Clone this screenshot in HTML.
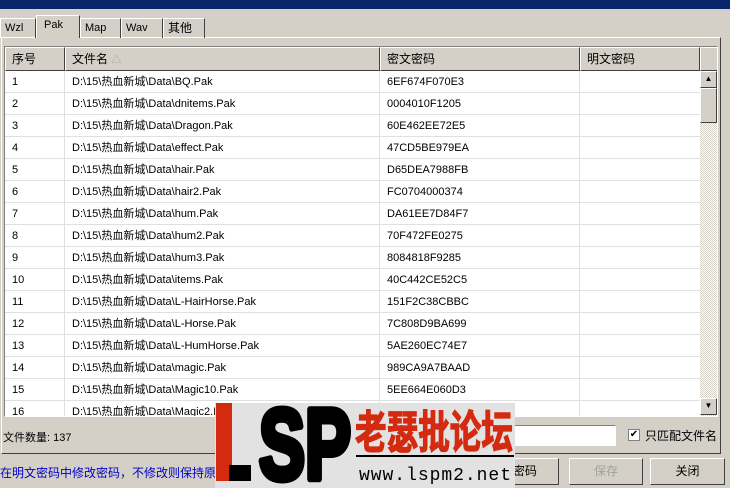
<!DOCTYPE html>
<html><head><meta charset="utf-8"><style>
*{margin:0;padding:0;box-sizing:border-box}
html,body{width:730px;height:488px;overflow:hidden}
body{background:#d4d0c8;font-family:"Liberation Sans","Noto Sans CJK SC",sans-serif;font-size:11px;color:#000;position:relative}
.abs{position:absolute}
.title{left:0;top:0;width:730px;height:9px;background:#0a246a}
.tab{position:absolute;top:18px;height:20px;border:1px solid #fff;border-right:1px solid #404040;border-bottom:none;padding:0 0 0 4px;font-size:11px;line-height:19px}
.panel{left:1px;top:37px;width:720px;height:417px;border:1px solid #fff;border-right-color:#404040;border-bottom-color:#404040}
.list{left:4px;top:46px;width:714px;height:371px;background:#fff;border:1px solid #808080;border-right-color:#fff;border-bottom-color:#fff;overflow:hidden}
.hd{position:absolute;top:0;height:24px;background:#d4d0c8;border:1px solid #fff;border-right-color:#404040;border-bottom-color:#404040;padding:0 0 0 6px;font-size:12px;line-height:22px}
.row{position:absolute;left:0;width:695px;height:22px;border-bottom:1px solid #e0dfe3;font-size:11px}
.row span{position:absolute;top:1px;line-height:21px;height:21px}
.vl{position:absolute;top:24px;width:1px;height:350px;background:#e0dfe3}
.sb{position:absolute;left:695px;top:24px;width:17px;height:346px;background:repeating-conic-gradient(#d4d0c8 0 25%,#fff 0 50%) 0 0/2px 2px}
.btn3{position:absolute;background:#d4d0c8;border:1px solid #fff;border-right-color:#404040;border-bottom-color:#404040}
.btn{position:absolute;top:458px;height:27px;background:#d4d0c8;border:1px solid #fff;border-right-color:#404040;border-bottom-color:#404040;text-align:center;font-size:12px;line-height:24px}
</style></head><body>
<div class="abs title"></div>
<div class="abs panel"></div>
<div class="tab" style="left:0;width:36px;">Wzl</div>
<div class="tab" style="left:36px;top:15px;height:23px;width:44px;background:#d4d0c8;padding-left:7px;">Pak</div>
<div class="tab" style="left:80px;width:41px;">Map</div>
<div class="tab" style="left:121px;width:42px;">Wav</div>
<div class="tab" style="left:163px;width:42px;font-size:12px">其他</div>
<div class="abs list">
<div class="hd" style="left:0;width:60px">序号</div>
<div class="hd" style="left:60px;width:315px">文件名 <span style="color:#a0a0a0;font-size:10px">△</span></div>
<div class="hd" style="left:375px;width:200px">密文密码</div>
<div class="hd" style="left:575px;width:120px">明文密码</div>
<div class="hd" style="left:695px;width:19px;padding:0"></div>
<div class="vl" style="left:59px"></div><div class="vl" style="left:374px"></div><div class="vl" style="left:574px"></div>
<div class="row" style="top:24px"><span style="left:7px">1</span><span style="left:67px">D:\15\热血新城\Data\BQ.Pak</span><span style="left:382px">6EF674F070E3</span></div>
<div class="row" style="top:46px"><span style="left:7px">2</span><span style="left:67px">D:\15\热血新城\Data\dnitems.Pak</span><span style="left:382px">0004010F1205</span></div>
<div class="row" style="top:68px"><span style="left:7px">3</span><span style="left:67px">D:\15\热血新城\Data\Dragon.Pak</span><span style="left:382px">60E462EE72E5</span></div>
<div class="row" style="top:90px"><span style="left:7px">4</span><span style="left:67px">D:\15\热血新城\Data\effect.Pak</span><span style="left:382px">47CD5BE979EA</span></div>
<div class="row" style="top:112px"><span style="left:7px">5</span><span style="left:67px">D:\15\热血新城\Data\hair.Pak</span><span style="left:382px">D65DEA7988FB</span></div>
<div class="row" style="top:134px"><span style="left:7px">6</span><span style="left:67px">D:\15\热血新城\Data\hair2.Pak</span><span style="left:382px">FC0704000374</span></div>
<div class="row" style="top:156px"><span style="left:7px">7</span><span style="left:67px">D:\15\热血新城\Data\hum.Pak</span><span style="left:382px">DA61EE7D84F7</span></div>
<div class="row" style="top:178px"><span style="left:7px">8</span><span style="left:67px">D:\15\热血新城\Data\hum2.Pak</span><span style="left:382px">70F472FE0275</span></div>
<div class="row" style="top:200px"><span style="left:7px">9</span><span style="left:67px">D:\15\热血新城\Data\hum3.Pak</span><span style="left:382px">8084818F9285</span></div>
<div class="row" style="top:222px"><span style="left:7px">10</span><span style="left:67px">D:\15\热血新城\Data\items.Pak</span><span style="left:382px">40C442CE52C5</span></div>
<div class="row" style="top:244px"><span style="left:7px">11</span><span style="left:67px">D:\15\热血新城\Data\L-HairHorse.Pak</span><span style="left:382px">151F2C38CBBC</span></div>
<div class="row" style="top:266px"><span style="left:7px">12</span><span style="left:67px">D:\15\热血新城\Data\L-Horse.Pak</span><span style="left:382px">7C808D9BA699</span></div>
<div class="row" style="top:288px"><span style="left:7px">13</span><span style="left:67px">D:\15\热血新城\Data\L-HumHorse.Pak</span><span style="left:382px">5AE260EC74E7</span></div>
<div class="row" style="top:310px"><span style="left:7px">14</span><span style="left:67px">D:\15\热血新城\Data\magic.Pak</span><span style="left:382px">989CA9A7BAAD</span></div>
<div class="row" style="top:332px"><span style="left:7px">15</span><span style="left:67px">D:\15\热血新城\Data\Magic10.Pak</span><span style="left:382px">5EE664E060D3</span></div>
<div class="row" style="top:354px"><span style="left:7px">16</span><span style="left:67px">D:\15\热血新城\Data\Magic2.Pak</span></div>
<div class="sb"></div>
<div class="btn3" style="left:695px;top:24px;width:17px;height:17px;font-size:8px;text-align:center;line-height:14px">▲</div>
<div class="btn3" style="left:695px;top:41px;width:17px;height:35px"></div>
<div class="btn3" style="left:695px;top:351px;width:17px;height:17px;font-size:8px;text-align:center;line-height:14px">▼</div>
</div>
<div class="abs" style="left:3px;top:429px;font-size:11px">文件数量: 137</div>
<div class="abs" style="left:512px;top:425px;width:104px;height:21px;background:#fff;border:1px solid #808080;border-right-color:#fff;border-bottom-color:#fff"></div>
<div class="abs" style="left:628px;top:429px;width:12px;height:12px;background:#fff;border:1px solid #808080;font-size:10px;line-height:10px;text-align:center">✔</div>
<div class="abs" style="left:645px;top:427px;font-size:12px">只匹配文件名</div>
<div class="abs" style="left:0;top:464px;color:#0000c8;font-size:12px;white-space:nowrap">在明文密码中修改密码，不修改则保持原样</div>
<div class="btn" style="left:470px;width:89px">Pak密码</div>
<div class="btn" style="left:569px;width:74px;color:#a0a0a0">保存</div>
<div class="btn" style="left:650px;width:75px">关闭</div>
<svg class="abs" style="left:215px;top:403px" width="300" height="85" viewBox="0 0 300 85">
<rect width="300" height="85" fill="#e2e2e2"/>
<rect x="1" y="0" width="16" height="78" fill="#d42a10"/>
<rect x="14" y="62" width="22" height="16" fill="#000"/>
<text x="44" y="76" font-family="Liberation Sans" font-weight="bold" font-size="100" textLength="92" lengthAdjust="spacingAndGlyphs" fill="#000" stroke="#000" stroke-width="7" stroke-linejoin="round">SP</text>
<g transform="translate(140,45) scale(1,1.25)">
<text x="0" y="0" font-family="Noto Sans CJK SC" font-weight="bold" font-size="36" textLength="158" lengthAdjust="spacingAndGlyphs" fill="#d42a10" stroke="#d42a10" stroke-width="1">老瑟批论坛</text>
</g>
<rect x="141" y="52" width="158" height="2" fill="#000"/>
<text x="144" y="77" font-family="Liberation Mono" font-size="18" textLength="152" lengthAdjust="spacing" fill="#000">www.lspm2.net</text>
</svg>
</body></html>
